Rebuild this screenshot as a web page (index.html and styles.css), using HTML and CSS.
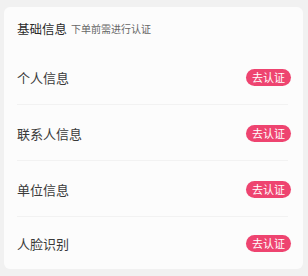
FILE: index.html
```html
<!DOCTYPE html>
<html lang="zh">
<head>
<meta charset="utf-8">
<link rel="stylesheet" href="styles.css">
</head>
<body>
<div class="card">
  <div class="header">
    <span class="title">基础信息</span>
    <span class="sub">下单前需进行认证</span>
  </div>
  <div class="row"><span class="label">个人信息</span><span class="btn">去认证</span></div>
  <div class="row"><span class="label">联系人信息</span><span class="btn">去认证</span></div>
  <div class="row"><span class="label">单位信息</span><span class="btn">去认证</span></div>
  <div class="row last"><span class="label">人脸识别</span><span class="btn">去认证</span></div>
</div>
</body>
</html>
```
FILE: styles.css
```css
html, body {
  margin: 0;
  padding: 0;
  background: #f1f1f1;
  font-family: "Noto Sans CJK SC", "Noto Sans", sans-serif;
}
body {
  padding: 7px 5px 0 4px;
}
.card {
  background: #fcfcfc;
  border-radius: 6px;
  padding: 0 12px 0 13px;
}
.header {
  height: 42px;
  display: flex;
  align-items: center;
  gap: 4px;
}
.title {
  font-size: 12.5px;
  color: #2a2a2a;
}
.sub {
  font-size: 10px;
  color: #666;
}
.row {
  height: 56px;
  display: flex;
  align-items: center;
  justify-content: space-between;
  background: linear-gradient(#f2f2f2, #f2f2f2) no-repeat left bottom / calc(100% - 3px) 1px;
}
.row.last {
  background: none;
  height: 52px;
}
.label {
  font-size: 13px;
  color: #3a3a3a;
}
.btn {
  background: #ee4470;
  color: #fff;
  font-size: 11px;
  line-height: 17px;
  height: 17px;
  padding: 0 6px;
  border-radius: 9px;
}
```
